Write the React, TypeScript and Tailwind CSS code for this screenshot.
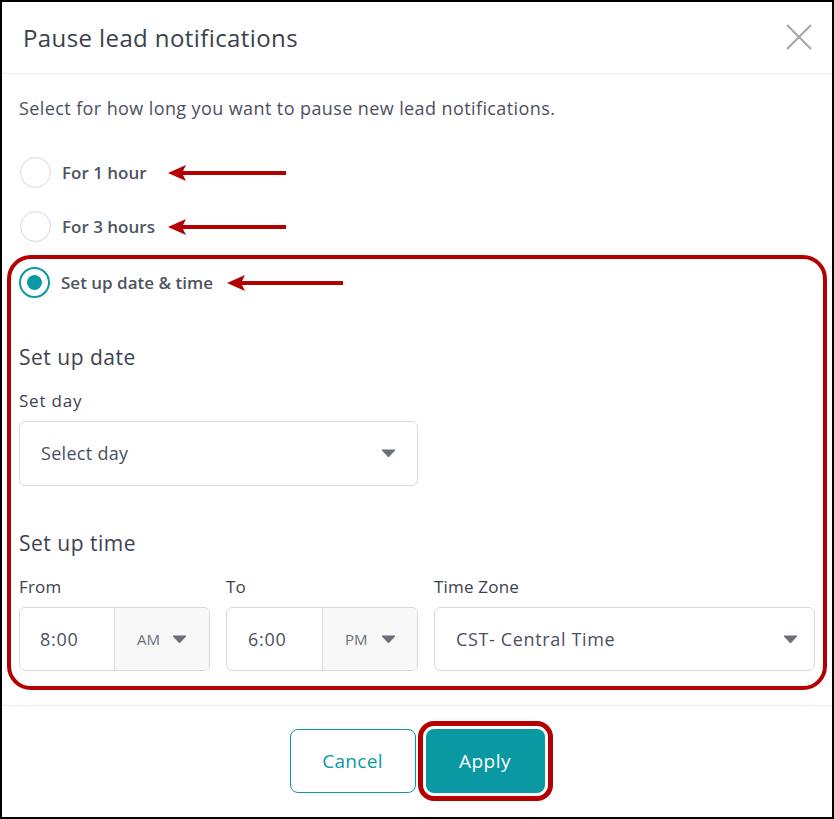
import { useState } from "react";

type Option = "1h" | "3h" | "custom";

function Caret() {
  return (
    <svg width="15" height="9" viewBox="0 0 15 9" className="shrink-0">
      <path d="M1 1h13l-6.5 7z" fill="#6b6f78" stroke="#6b6f78" strokeLinejoin="round" />
    </svg>
  );
}

function Arrow({ width }: { width: number }) {
  return (
    <svg width={width} height="20" viewBox={`0 0 ${width} 20`} className="shrink-0">
      <path d={`M0 10 L18 2 L15 8 L${width} 8 L${width} 12 L15 12 L18 18 Z`} fill="#b30000" />
    </svg>
  );
}

function Radio({ checked, onClick }: { checked: boolean; onClick: () => void }) {
  return (
    <button
      onClick={onClick}
      className={
        checked
          ? "flex h-[31px] w-[31px] shrink-0 items-center justify-center rounded-full border-2 border-[#0b9aa4] bg-white"
          : "flex h-[31px] w-[31px] shrink-0 items-center justify-center rounded-full border-[1.5px] border-[#d5d8dc] bg-white"
      }
    >
      {checked && <span className="h-[15px] w-[15px] rounded-full bg-[#0b9aa4]" />}
    </button>
  );
}

export default function App() {
  const [opt, setOpt] = useState<Option>("custom");

  return (
    <div
      className="flex h-[819px] w-[834px] flex-col border-2 border-black bg-white text-[#3d4250]"
      style={{ fontFamily: "'Open Sans', Lato, sans-serif" }}
    >
      {/* header */}
      <div className="flex h-[72px] shrink-0 items-center justify-between border-b border-[#ececec] pl-[21px] pr-[20px]">
        <h1 className="text-[24px] leading-none tracking-[0.4px] text-[#3a3f4c]">Pause lead notifications</h1>
        <button className="mt-[-2px]">
          <svg width="26" height="26" viewBox="0 0 26 26">
            <path d="M1 1L25 25M25 1L1 25" stroke="#a2a5aa" strokeWidth="2" />
          </svg>
        </button>
      </div>

      {/* body */}
      <div className="flex flex-col">
        <p className="mt-[22px] pl-[17px] text-[18px] leading-[24px] tracking-[0.4px] text-[#4b5060]">
          Select for how long you want to pause new lead notifications.
        </p>

        <div className="mt-[37px] flex h-[31px] items-center pl-[18px]">
          <Radio checked={opt === "1h"} onClick={() => setOpt("1h")} />
          <span className="ml-[11px] w-[106px] text-[17px] font-semibold text-[#4f5461]">For 1 hour</span>
          <Arrow width={118} />
        </div>

        <div className="mt-[23px] flex h-[31px] items-center pl-[18px]">
          <Radio checked={opt === "3h"} onClick={() => setOpt("3h")} />
          <span className="ml-[11px] w-[106px] text-[17px] font-semibold text-[#4f5461]">For 3 hours</span>
          <Arrow width={118} />
        </div>

        <div className="mx-[5px] mt-[13px] rounded-[24px] border-4 border-[#b30000] pb-[15px] pl-[8px] pr-[8px] pt-[8px]">
          <div className="flex h-[31px] items-center">
            <Radio checked={opt === "custom"} onClick={() => setOpt("custom")} />
            <span className="ml-[11px] w-[166px] text-[17px] font-semibold text-[#4f5461]">Set up date &amp; time</span>
            <Arrow width={116} />
          </div>

          <h2 className="mt-[45px] text-[21px] leading-[28px] tracking-[0.5px] text-[#3d4250]">Set up date</h2>
          <div className="mt-[19px] text-[17px] leading-[22px] tracking-[0.8px] text-[#3d4250]">Set day</div>
          <div className="mt-[9px] flex h-[65px] w-[399px] items-center justify-between rounded-[6px] border border-[#d7dadd] pl-[21px] pr-[21px]">
            <span className="text-[18px] tracking-[0.3px] text-[#4b5060]">Select day</span>
            <Caret />
          </div>

          <h2 className="mt-[43px] text-[21px] leading-[28px] tracking-[0.5px] text-[#3d4250]">Set up time</h2>
          <div className="mt-[19px] grid grid-cols-[191px_192px_1fr] gap-x-4 text-[17px] leading-[22px] tracking-[0.2px]">
            <div>From</div>
            <div>To</div>
            <div>Time Zone</div>

            <div className="mt-[9px] flex h-[64px] overflow-hidden rounded-[6px] border border-[#d7dadd]">
              <div className="flex w-[94px] items-center pl-[20px] text-[18px] tracking-[0.7px] text-[#4b5060]">8:00</div>
              <div className="flex flex-1 items-center gap-[12px] border-l border-[#d7dadd] bg-[#f8f8f9] pl-[22px] text-[15px] tracking-normal text-[#6b6f78]">
                AM <Caret />
              </div>
            </div>
            <div className="mt-[9px] flex h-[64px] overflow-hidden rounded-[6px] border border-[#d7dadd]">
              <div className="flex w-[95px] items-center pl-[21px] text-[18px] tracking-[0.7px] text-[#4b5060]">6:00</div>
              <div className="flex flex-1 items-center gap-[13px] border-l border-[#d7dadd] bg-[#f8f8f9] pl-[22px] text-[15px] tracking-normal text-[#6b6f78]">
                PM <Caret />
              </div>
            </div>
            <div className="mt-[9px] flex h-[64px] items-center justify-between rounded-[6px] border border-[#d7dadd] pl-[21px] pr-[16px]">
              <span className="text-[18px] tracking-[0.65px] text-[#4b5060]">CST- Central Time</span>
              <Caret />
            </div>
          </div>
        </div>
      </div>

      {/* footer */}
      <div className="mt-[15px] flex flex-1 items-start justify-center gap-[10px] border-t border-[#ececec] pt-[23px]">
        <button className="h-[64px] w-[126px] rounded-[8px] border border-[#0b9aa4] text-[19px] tracking-[0.3px] text-[#0b9aa4]">
          Cancel
        </button>
        <button className="h-[64px] w-[119px] rounded-[8px] bg-[#0a99a3] text-[19px] tracking-[0.5px] text-white outline-[5px] outline-offset-[3px] outline-[#b30000] [outline-style:solid]">
          Apply
        </button>
      </div>
    </div>
  );
}
